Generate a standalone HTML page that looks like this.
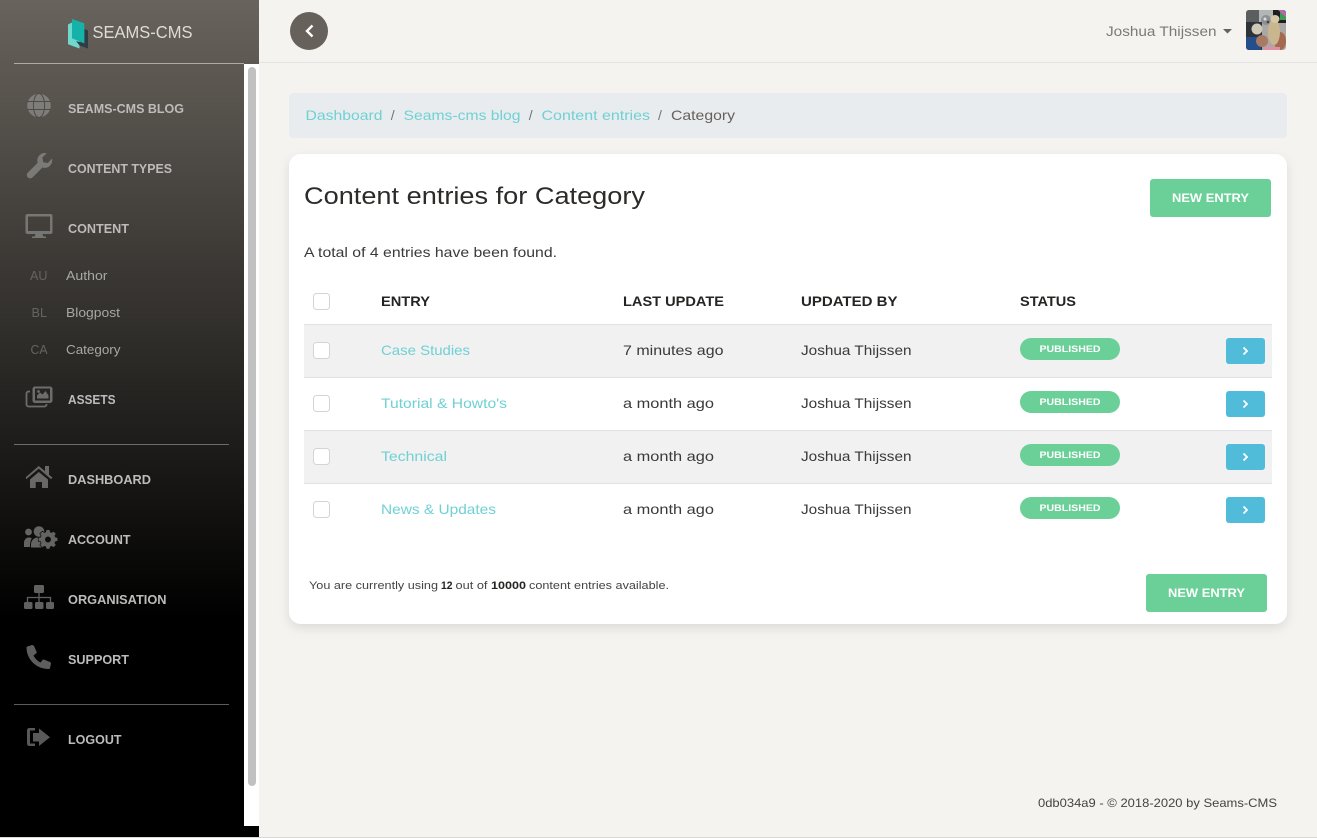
<!DOCTYPE html>
<html>
<head>
<meta charset="utf-8">
<title>Seams-CMS</title>
<style>
html,body{margin:0;padding:0;background:#f4f3ef;overflow:hidden}
svg{display:block}
text{font-family:"Liberation Sans",sans-serif}
.nav{font-size:12.5px;font-weight:700;fill:#bdbcba}
.sub{font-size:13px;fill:#a8a7a5}
.abb{font-size:13px;fill:#66645f}
.b{font-size:14px;fill:#3a3a3a}
.l{font-size:14px;fill:#6fd1d4}
.h{font-size:14px;font-weight:700;fill:#252422}
.bt{font-size:12px;font-weight:700;fill:#fff}
.bd{font-size:9.5px;font-weight:700;fill:#fff}
</style>
</head>
<body>
<svg xmlns="http://www.w3.org/2000/svg" width="1317" height="838" viewBox="0 0 1317 838">
<defs>
<linearGradient id="g" x1="0" y1="0" x2="0" y2="1"><stop offset="0" stop-color="#68635c"/><stop offset="0.74" stop-color="#000"/><stop offset="1" stop-color="#000"/></linearGradient>
<linearGradient id="ic" gradientUnits="userSpaceOnUse" x1="0" y1="90" x2="0" y2="750"><stop offset="0" stop-color="#7f7e7b"/><stop offset="1" stop-color="#585858"/></linearGradient>
<filter id="s" x="-5%" y="-5%" width="110%" height="115%"><feDropShadow dx="0" dy="4" stdDeviation="5" flood-color="#000" flood-opacity=".1"/></filter>
<clipPath id="av"><rect width="40" height="40" rx="3"/></clipPath>
</defs>
<rect width="1317" height="838" fill="#f4f3ef"/>
<rect width="259" height="838" fill="url(#g)"/>
<rect x="244" y="64" width="15" height="762" fill="#fff"/>
<rect x="248" y="67" width="8" height="719" rx="4" fill="#c1c1c1"/>
<rect x="0" y="837" width="1317" height="1" fill="#d8d8d6"/>
<rect x="14" y="63" width="230" height="1" fill="#aeaba6"/>
<rect x="14" y="444" width="215" height="1" fill="#6e6d6b"/>
<rect x="14" y="704" width="215" height="1" fill="#5c5c5c"/>
<rect x="259" y="62" width="1058" height="1" fill="#e3e3e3"/>

<!-- logo -->
<polygon points="68,24.500 72,22.500 72,38 79.500,41 79.500,48.500 68,44.300" fill="#70d8cf"/>
<polygon points="76,41 84.500,43.500 84.500,29 88,30.500 88,48.500 79.500,45.500" fill="#2c3d46"/>
<polygon points="72,19 84.300,23.300 84.300,43.300 72,38.300" fill="#14b2a8"/>
<text x="92.500" y="38" font-size="17.500" fill="#dfddd9" textLength="100" lengthAdjust="spacingAndGlyphs">SEAMS-CMS</text>

<!-- sidebar icons -->
<g fill="url(#ic)">
<circle cx="39" cy="105.500" r="11.800"/>
<g fill="none" stroke="#4f4b46" stroke-width="1"><ellipse cx="39" cy="105.500" rx="5.600" ry="12"/><path d="M27 101.500h24M27 109.500h24"/></g>
<path transform="translate(1,0)" d="M51 158.500c.6 2.600-.1 5.300-2 7.200-2 2-4.900 2.700-7.500 1.800L31.600 177.400c-1.300 1.300-3.500 1.300-4.800 0s-1.300-3.500 0-4.800l9.900-9.900c-.9-2.600-.2-5.500 1.800-7.500 1.900-1.900 4.600-2.600 7.200-2l-4.300 4.300.8 4.700 4.700.8z"/>
<path fill-rule="evenodd" d="M27.500 214h23a2 2 0 0 1 2 2v16a2 2 0 0 1-2 2H42.500l.8 2.500h2.700v1.500H32v-1.500h2.700l.8-2.500H27.500a2 2 0 0 1-2-2v-16a2 2 0 0 1 2-2zm.5 2.500v14.500h22V216.500z"/>
<path fill-rule="evenodd" d="M35 386.500h15a2.500 2.500 0 0 1 2.500 2.500v11.500a2.500 2.500 0 0 1-2.500 2.500H35a2.500 2.500 0 0 1-2.500-2.500V389a2.500 2.500 0 0 1 2.500-2.500zm0 2v12h15v-12z"/>
<path d="M37 398.500v-3l3-3 2.500 2 3-3.500 3 4.500v3z"/><circle cx="38.500" cy="391.500" r="1.400"/>
<path fill="none" stroke="url(#ic)" stroke-width="1.800" d="M30 391.500h-1.500a2 2 0 0 0-2 2v11a2 2 0 0 0 2 2h16a2 2 0 0 0 2-2v-.5"/>
<path d="M25.700 477.300 38.800 466l6.200 5.300V466h4v8.700l3.500 2.900-1.500 1.500-12.200-10.500-12.500 10.500z"/>
<path d="M30 479.500 38.800 472l9.200 7.500v8.500h-6v-6h-6.300v6H30z"/>
<circle cx="28.500" cy="532" r="3.400"/><circle cx="39" cy="531.500" r="5.300"/>
<path d="M24 547v-4c0-3 2-5.500 4.500-5.500 1.500 0 2.500.3 3.300 1-1.500 2-1.800 5-1.800 8.500z"/>
<path d="M31 547.500v-3c0-4 3-7 7-7h5c-2.500 3-2.500 7 .5 10z"/>
<path stroke="#111" stroke-width="1.500" paint-order="stroke" fill-rule="evenodd" d="M46.500 533.500h3l.5 2.200 1.600.7 2-1.200 2.100 2.100-1.200 2 .7 1.600 2.200.5v3l-2.200.5-.7 1.600 1.200 2-2.100 2.100-2-1.200-1.600.7-.5 2.200h-3l-.5-2.200-1.600-.7-2 1.200-2.100-2.100 1.200-2-.7-1.600-2.200-.5v-3l2.200-.5.7-1.600-1.200-2 2.100-2.100 2 1.200 1.600-.7zm1.500 6.500a3 3 0 1 0 0 6 3 3 0 0 0 0-6z" transform="translate(0,-3.500)"/>
<rect x="34" y="585" width="10" height="8" rx="1.500"/><rect x="24" y="602" width="8.500" height="7" rx="1.500"/><rect x="35" y="602" width="8.500" height="7" rx="1.500"/><rect x="46" y="602" width="8" height="7" rx="1.500"/>
<path fill="none" stroke="url(#ic)" stroke-width="1.300" d="M39 593v9M27.500 602v-4.500h23v4.500"/>
<path d="M27.500 646.500 32 645C33 645 33.500 645.500 34 646L36.500 651.500C36.800 652.500 36.500 653 36 653.500L33.500 655.500C35 658.500 37.500 661 40.500 662.500L42.500 660C43 659.500 43.500 659.300 44.500 659.700L50 662C50.700 662.400 51 663 51 663.700L50 668C49.800 668.700 49.300 669 48.500 669 36 669 26.500 659 26.500 647.500 26.500 647 27 646.700 27.500 646.500Z"/>
<path d="M39 728.500 50 737.300 39 746v-4.500h-6v-8.500h6z"/>
<path d="M35 728h-5.500c-1.500 0-2.500 1-2.500 2.500v13c0 1.500 1 2.500 2.500 2.500H35v-2.500h-5v-13h5z"/>
</g>

<!-- sidebar text -->
<text class="nav" x="68" y="113" textLength="116" lengthAdjust="spacingAndGlyphs">SEAMS-CMS BLOG</text>
<text class="nav" x="68" y="173" textLength="104" lengthAdjust="spacingAndGlyphs">CONTENT TYPES</text>
<text class="nav" x="68" y="233" textLength="61" lengthAdjust="spacingAndGlyphs">CONTENT</text>
<text class="abb" x="30" y="280" textLength="17.500" lengthAdjust="spacingAndGlyphs">AU</text>
<text class="sub" x="66" y="280" textLength="41.500" lengthAdjust="spacingAndGlyphs">Author</text>
<text class="abb" x="31.500" y="317" textLength="15.500" lengthAdjust="spacingAndGlyphs">BL</text>
<text class="sub" x="66" y="317" textLength="54" lengthAdjust="spacingAndGlyphs">Blogpost</text>
<text class="abb" x="30.500" y="354" textLength="17" lengthAdjust="spacingAndGlyphs">CA</text>
<text class="sub" x="66" y="354" textLength="54.500" lengthAdjust="spacingAndGlyphs">Category</text>
<text class="nav" x="68" y="404" textLength="47.500" lengthAdjust="spacingAndGlyphs">ASSETS</text>
<text class="nav" x="68" y="484" textLength="83" lengthAdjust="spacingAndGlyphs">DASHBOARD</text>
<text class="nav" x="68" y="544" textLength="62.500" lengthAdjust="spacingAndGlyphs">ACCOUNT</text>
<text class="nav" x="68" y="604" textLength="98.500" lengthAdjust="spacingAndGlyphs">ORGANISATION</text>
<text class="nav" x="68" y="664" textLength="61" lengthAdjust="spacingAndGlyphs">SUPPORT</text>
<text class="nav" x="68" y="744" textLength="53.500" lengthAdjust="spacingAndGlyphs">LOGOUT</text>

<!-- topbar -->
<circle cx="309" cy="31" r="19" fill="#66615b"/>
<path d="M312.500 25.500 307 31l5.500 5.500" fill="none" stroke="#fff" stroke-width="2.400"/>
<text x="1106" y="36" font-size="14" fill="#7b7a77" textLength="110.500" lengthAdjust="spacingAndGlyphs">Joshua Thijssen</text>
<polygon points="1223,29 1232,29 1227.500,33.500" fill="#66615b"/>
<svg x="1246" y="10" width="40" height="40" viewBox="0 0 40 40">
<g clip-path="url(#av)">
<rect width="40" height="40" fill="#a9a8a6"/>
<rect width="27" height="14" fill="#b4b5b5"/>
<rect width="13" height="12" fill="#5c5f60"/>
<rect x="27" width="13" height="13" fill="#1b1f22"/>
<rect x="34" width="6" height="10" fill="#3f9a55"/>
<polygon points="32,0 37,0 40,3 40,7" fill="#c75fb6"/>
<circle cx="20" cy="10" r="5" fill="#8d9092"/>
<circle cx="19" cy="9" r="1.500" fill="#dcdddd"/><circle cx="22" cy="12" r="1.300" fill="#3f4346"/>
<rect y="12" width="16" height="28" fill="#2f3236"/>
<rect x="0" y="27" width="15" height="13" fill="#254f8a"/>
<circle cx="11" cy="19" r="5.500" fill="#cfc9b8"/>
<ellipse cx="16" cy="31" rx="6" ry="6" fill="#a87a64"/>
<ellipse cx="34" cy="31" rx="6" ry="9" fill="#a5694f"/>
<ellipse cx="28" cy="22" rx="6" ry="13" fill="#c9b58e"/>
<ellipse cx="29" cy="9" rx="4.500" ry="4" fill="#d6c8a6"/>
<rect x="18" y="37" width="16" height="3" fill="#e08fa0"/>
</g>
</svg>

<!-- breadcrumb -->
<rect x="289" y="93" width="998" height="45" rx="4" fill="#e9ecef"/>
<text class="l" x="305.500" y="120" textLength="77" lengthAdjust="spacingAndGlyphs">Dashboard</text>
<text x="390.700" y="120" font-size="14" fill="#6c757d">/</text>
<text class="l" x="403.500" y="120" textLength="117" lengthAdjust="spacingAndGlyphs">Seams-cms blog</text>
<text x="528.700" y="120" font-size="14" fill="#6c757d">/</text>
<text class="l" x="541.500" y="120" textLength="108.500" lengthAdjust="spacingAndGlyphs">Content entries</text>
<text x="658" y="120" font-size="14" fill="#6c757d">/</text>
<text x="671" y="120" font-size="14" fill="#66615b" textLength="64" lengthAdjust="spacingAndGlyphs">Category</text>

<!-- card -->
<rect x="289" y="154" width="998" height="470" rx="12" fill="#fff" filter="url(#s)"/>
<text x="304" y="204" font-size="24" fill="#2c2b29" textLength="341" lengthAdjust="spacingAndGlyphs">Content entries for Category</text>
<rect x="1150" y="179" width="121" height="38" rx="3" fill="#6bd098"/>
<text class="bt" x="1172" y="202" textLength="77" lengthAdjust="spacingAndGlyphs">NEW ENTRY</text>
<text class="b" x="304" y="257" textLength="253" lengthAdjust="spacingAndGlyphs">A total of 4 entries have been found.</text>

<!-- table -->
<rect x="313.500" y="293.500" width="16" height="16" rx="3" fill="#fff" stroke="#d4d4d4"/>
<text class="h" x="381" y="306" textLength="49" lengthAdjust="spacingAndGlyphs">ENTRY</text>
<text class="h" x="623" y="306" textLength="101" lengthAdjust="spacingAndGlyphs">LAST UPDATE</text>
<text class="h" x="801" y="306" textLength="96.500" lengthAdjust="spacingAndGlyphs">UPDATED BY</text>
<text class="h" x="1020" y="306" textLength="56" lengthAdjust="spacingAndGlyphs">STATUS</text>

<rect x="304" y="325" width="968" height="52" fill="#f1f1f1"/>
<rect x="304" y="431" width="968" height="52" fill="#f1f1f1"/>
<rect x="304" y="324" width="968" height="1" fill="#dee2e6"/>
<rect x="304" y="377" width="968" height="1" fill="#dee2e6"/>
<rect x="304" y="430" width="968" height="1" fill="#dee2e6"/>
<rect x="304" y="483" width="968" height="1" fill="#dee2e6"/>

<g fill="#fff" stroke="#d4d4d4">
<rect x="313.500" y="342.500" width="16" height="16" rx="3"/>
<rect x="313.500" y="395.500" width="16" height="16" rx="3"/>
<rect x="313.500" y="448.500" width="16" height="16" rx="3"/>
<rect x="313.500" y="501.500" width="16" height="16" rx="3"/>
</g>

<text class="l" x="381" y="355" textLength="89" lengthAdjust="spacingAndGlyphs">Case Studies</text>
<text class="b" x="623" y="355" textLength="100.500" lengthAdjust="spacingAndGlyphs">7 minutes ago</text>
<text class="b" x="801" y="355" textLength="110.500" lengthAdjust="spacingAndGlyphs">Joshua Thijssen</text>
<text class="l" x="381" y="408" textLength="126" lengthAdjust="spacingAndGlyphs">Tutorial &amp; Howto's</text>
<text class="b" x="623" y="408" textLength="91" lengthAdjust="spacingAndGlyphs">a month ago</text>
<text class="b" x="801" y="408" textLength="110.500" lengthAdjust="spacingAndGlyphs">Joshua Thijssen</text>
<text class="l" x="381" y="461" textLength="66" lengthAdjust="spacingAndGlyphs">Technical</text>
<text class="b" x="623" y="461" textLength="91" lengthAdjust="spacingAndGlyphs">a month ago</text>
<text class="b" x="801" y="461" textLength="110.500" lengthAdjust="spacingAndGlyphs">Joshua Thijssen</text>
<text class="l" x="381" y="514" textLength="115" lengthAdjust="spacingAndGlyphs">News &amp; Updates</text>
<text class="b" x="623" y="514" textLength="91" lengthAdjust="spacingAndGlyphs">a month ago</text>
<text class="b" x="801" y="514" textLength="110.500" lengthAdjust="spacingAndGlyphs">Joshua Thijssen</text>

<g fill="#6bd098">
<rect x="1020" y="338" width="100" height="22" rx="11"/>
<rect x="1020" y="391" width="100" height="22" rx="11"/>
<rect x="1020" y="444" width="100" height="22" rx="11"/>
<rect x="1020" y="497" width="100" height="22" rx="11"/>
</g>
<text class="bd" x="1039.500" y="352" textLength="61" lengthAdjust="spacingAndGlyphs">PUBLISHED</text>
<text class="bd" x="1039.500" y="405" textLength="61" lengthAdjust="spacingAndGlyphs">PUBLISHED</text>
<text class="bd" x="1039.500" y="458" textLength="61" lengthAdjust="spacingAndGlyphs">PUBLISHED</text>
<text class="bd" x="1039.500" y="511" textLength="61" lengthAdjust="spacingAndGlyphs">PUBLISHED</text>

<g fill="#51bcda">
<rect x="1226" y="338" width="39" height="26" rx="3"/>
<rect x="1226" y="391" width="39" height="26" rx="3"/>
<rect x="1226" y="444" width="39" height="26" rx="3"/>
<rect x="1226" y="497" width="39" height="26" rx="3"/>
</g>
<g fill="none" stroke="#fff" stroke-width="1.800">
<path d="M1243.500 347.500l3.500 3.500-3.500 3.500"/>
<path d="M1243.500 400.500l3.500 3.500-3.500 3.500"/>
<path d="M1243.500 453.500l3.500 3.500-3.500 3.500"/>
<path d="M1243.500 506.500l3.500 3.500-3.500 3.500"/>
</g>

<!-- card footer -->
<text font-size="11" fill="#444" x="309" y="589" textLength="129" lengthAdjust="spacingAndGlyphs">You are currently using</text>
<text font-size="11" font-weight="700" fill="#252422" x="441" y="589" textLength="11.500" lengthAdjust="spacingAndGlyphs">12</text>
<text font-size="11" fill="#444" x="455.500" y="589" textLength="32" lengthAdjust="spacingAndGlyphs">out of</text>
<text font-size="11" font-weight="700" fill="#252422" x="491" y="589" textLength="35" lengthAdjust="spacingAndGlyphs">10000</text>
<text font-size="11" fill="#444" x="529" y="589" textLength="140" lengthAdjust="spacingAndGlyphs">content entries available.</text>
<rect x="1146" y="574" width="121" height="38" rx="3" fill="#6bd098"/>
<text class="bt" x="1168" y="597" textLength="77" lengthAdjust="spacingAndGlyphs">NEW ENTRY</text>

<text font-size="12" fill="#444" x="1038" y="807" textLength="239" lengthAdjust="spacingAndGlyphs">0db034a9 - © 2018-2020 by Seams-CMS</text>
</svg>
</body>
</html>
